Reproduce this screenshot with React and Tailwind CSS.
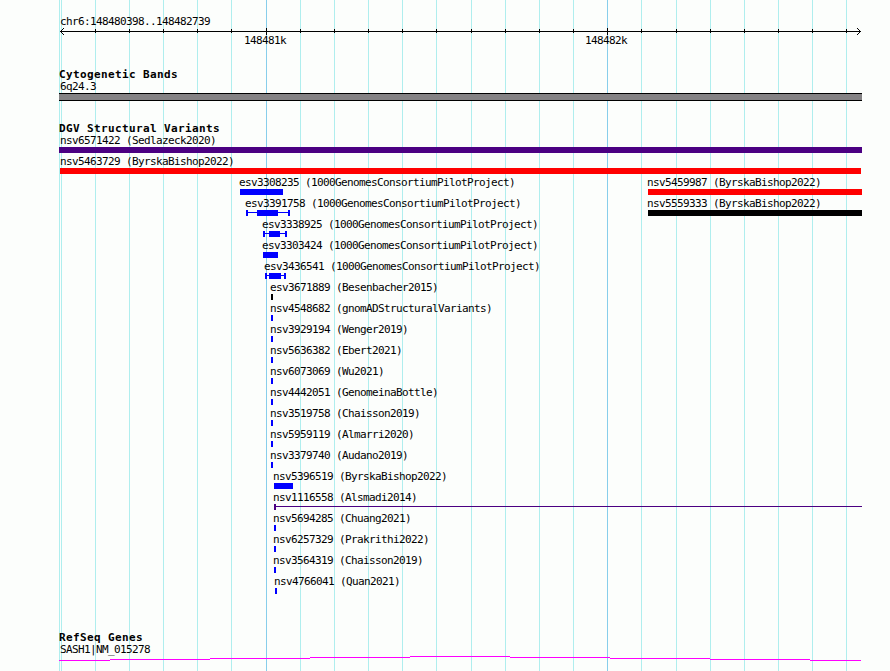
const LEFT = 59;
const RIGHT = 862;
const SECOND = 648;

const minorTicks = [
  95, 129, 163, 197, 231, 300, 334, 368, 402, 436, 471, 505, 539, 573, 641, 676,
  710, 744, 778, 812, 846,
];
const majorTicks = [266, 607];

const BLUE = "#0000ff";
const RED = "#ff0000";
const BLACK = "#000000";
const INDIGO = "#4b0082";

// every row holds one or two features; thick is the solid part when it is
// narrower than the whole feature
const rows = [
  [{ id: "nsv6571422", study: "Sedlazeck2020", start: 59, end: 862, color: INDIGO, label: 61 }],
  [{ id: "nsv5463729", study: "ByrskaBishop2022", start: 60, end: 861, color: RED, label: 61 }],
  [
    { id: "esv3308235", study: "1000GenomesConsortiumPilotProject", start: 240, end: 283, color: BLUE },
    { id: "nsv5459987", study: "ByrskaBishop2022", start: 648, end: 862, color: RED },
  ],
  [
    { id: "esv3391758", study: "1000GenomesConsortiumPilotProject", start: 246, end: 290, thick: [257, 278], color: BLUE },
    { id: "nsv5559333", study: "ByrskaBishop2022", start: 648, end: 862, color: BLACK },
  ],
  [{ id: "esv3338925", study: "1000GenomesConsortiumPilotProject", start: 263, end: 287, thick: [269, 280], color: BLUE }],
  [{ id: "esv3303424", study: "1000GenomesConsortiumPilotProject", start: 263, end: 278, color: BLUE }],
  [{ id: "esv3436541", study: "1000GenomesConsortiumPilotProject", start: 265, end: 286, thick: [269, 281], color: BLUE }],
  [{ id: "esv3671889", study: "Besenbacher2015", start: 271, end: 273, color: BLACK }],
  [{ id: "nsv4548682", study: "gnomADStructuralVariants", start: 271, end: 273, color: BLUE }],
  [{ id: "nsv3929194", study: "Wenger2019", start: 271, end: 273, color: BLUE }],
  [{ id: "nsv5636382", study: "Ebert2021", start: 271, end: 273, color: BLUE }],
  [{ id: "nsv6073069", study: "Wu2021", start: 271, end: 273, color: BLUE }],
  [{ id: "nsv4442051", study: "GenomeinaBottle", start: 271, end: 273, color: BLUE }],
  [{ id: "nsv3519758", study: "Chaisson2019", start: 271, end: 273, color: BLUE }],
  [{ id: "nsv5959119", study: "Almarri2020", start: 271, end: 273, color: BLUE }],
  [{ id: "nsv3379740", study: "Audano2019", start: 271, end: 273, color: BLUE }],
  [{ id: "nsv5396519", study: "ByrskaBishop2022", start: 274, end: 293, color: BLUE }],
  [{ id: "nsv1116558", study: "Alsmadi2014", start: 274, end: 862, thick: [274, 276], open: true, color: INDIGO }],
  [{ id: "nsv5694285", study: "Chuang2021", start: 274, end: 276, color: BLUE }],
  [{ id: "nsv6257329", study: "Prakrithi2022", start: 274, end: 276, color: BLUE }],
  [{ id: "nsv3564319", study: "Chaisson2019", start: 274, end: 276, color: BLUE }],
  [{ id: "nsv4766041", study: "Quan2021", start: 275, end: 277, color: BLUE }],
];

function GridLines() {
  return (
    <svg
      className="absolute inset-0"
      width="890"
      height="671"
      shapeRendering="crispEdges"
    >
      {[59, 61, ...minorTicks].map((x) => (
        <rect key={x} x={x} y="0" width="1" height="671" fill="#afeeee" />
      ))}
      {majorTicks.map((x) => (
        <rect key={x} x={x} y="0" width="1" height="671" fill="#87ceeb" />
      ))}
    </svg>
  );
}

function Ruler() {
  return (
    <div>
      <div className="pl-px">chr6:148480398..148482739</div>
      <svg
        className="block"
        width="803"
        height="7"
        viewBox="59 28 803 7"
        shapeRendering="crispEdges"
      >
        <rect x="60" y="31" width="801" height="1" />
        {minorTicks.map((x) => (
          <rect key={x} x={x} y="29" width="1" height="4" />
        ))}
        {majorTicks.map((x) => (
          <rect key={x} x={x} y="28" width="1" height="7" />
        ))}
        {/* arrow heads, one pixel per step */}
        <path d="M63 28h1v1h-1zM62 29h1v1h-1zM61 30h1v1h-1zM61 32h1v1h-1zM62 33h1v1h-1zM63 34h1v1h-1z" />
        <path d="M857 28h1v1h-1zM858 29h1v1h-1zM859 30h1v1h-1zM859 32h1v1h-1zM858 33h1v1h-1zM857 34h1v1h-1z" />
      </svg>
      <div className="flex pl-[185px]">
        <span className="w-[341px]">148481k</span>
        <span>148482k</span>
      </div>
    </div>
  );
}

function TrackTitle({ children }) {
  return (
    <h2 className="h-3 text-[11px] leading-3 font-bold tracking-[0.378px]">
      {children}
    </h2>
  );
}

function Glyph({ start, end, thick, open, color }) {
  const width = end - start;
  const [from, to] = thick || [start, end];
  return (
    <svg
      className="block"
      width={width}
      height="6"
      fill={color}
      shapeRendering="crispEdges"
    >
      <rect x={from - start} y="0" width={to - from} height="6" />
      {thick && <rect x="0" y="2" width={width} height="1" />}
      {thick && !open && (
        <>
          <rect x="0" y="0" width="2" height="6" />
          <rect x={width - 2} y="0" width="2" height="6" />
        </>
      )}
    </svg>
  );
}

function Feature({ feature, origin }) {
  const { id, study, start, label = start } = feature;
  return (
    <div className="w-0" style={{ marginLeft: start - origin }}>
      <div style={{ marginLeft: label - start - 1 }}>
        {id} ({study})
      </div>
      <Glyph {...feature} />
    </div>
  );
}

function App() {
  return (
    <main className="relative h-[671px] w-[890px] overflow-hidden bg-[#fcfefc]">
      <GridLines />
      <div className="relative ml-[59px] w-[803px] pt-4 font-['DejaVu_Sans_Mono',monospace] text-[11px] leading-3 tracking-[-0.622px] whitespace-nowrap text-black">
        <Ruler />

        <section className="pt-[22px]">
          <TrackTitle>Cytogenetic Bands</TrackTitle>
          <div className="pl-px">6q24.3</div>
          <div className="h-2 border-y border-black bg-[#848284]" />
        </section>

        <section className="pt-[22px]">
          <TrackTitle>DGV Structural Variants</TrackTitle>
          {rows.map((row) => (
            <div
              key={row[0].id}
              className="grid h-[21px] grid-cols-[589px_214px]"
            >
              {row.map((feature, i) => (
                <Feature
                  key={feature.id}
                  feature={feature}
                  origin={i === 0 ? LEFT : SECOND}
                />
              ))}
            </div>
          ))}
        </section>

        <section className="pt-[35px]">
          <TrackTitle>RefSeq Genes</TrackTitle>
          <div className="pl-px">SASH1|NM_015278</div>
          <svg
            className="block"
            width={RIGHT - LEFT}
            height="5"
            viewBox="59 656 803 5"
            fill="none"
            shapeRendering="crispEdges"
          >
            <path
              d="M59 660.5H110M110 659.5H210M210 658.5H310M310 657.5H410M410 656.5H510M510 657.5H610M610 658.5H710M710 659.5H810M810 660.5H861"
              stroke="#ff00ff"
            />
          </svg>
        </section>
      </div>
    </main>
  );
}

export default App;
